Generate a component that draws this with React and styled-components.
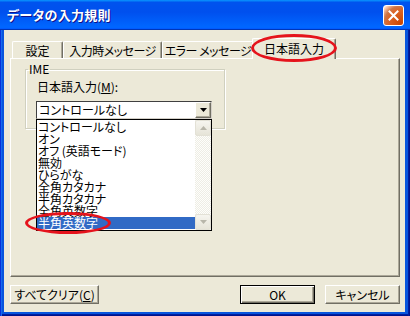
import React from 'react';
import styled, { createGlobalStyle } from 'styled-components';

const FONT = `"Noto Sans CJK JP", "Noto Sans", sans-serif`;

const Global = createGlobalStyle`
  html, body { margin: 0; padding: 0; background: #ffffff; }
  body { font-family: ${FONT}; font-size: 12px; color: #000; font-feature-settings: "palt" 1; }
  * { box-sizing: border-box; }
`;

const Window = styled.div`
  width: 410px;
  height: 316px;
  display: flex;
  flex-direction: column;
  font-family: ${FONT};
  font-feature-settings: "palt" 1;
  font-size: 12px;
  line-height: 12px;
`;

const TitleBar = styled.div`
  height: 30px;
  flex: none;
  display: flex;
  align-items: center;
  justify-content: space-between;
  padding: 0 6px 0 7px;
  background: linear-gradient(180deg, #0997ff, #0053ee 8%, #0050ee 40%, #0066ff 88%, #0066ff 93%, #005bff 95%, #0036b7 96%, #0036b7);
`;

const Title = styled.span`
  color: #fff;
  font-weight: bold;
  font-size: 13px;
  letter-spacing: 0.3px;
  text-shadow: 1px 1px #0f1089;
`;

const CloseButton = styled.div`
  width: 21px;
  height: 21px;
  border: 1px solid #fff;
  border-radius: 3px;
  display: flex;
  align-items: center;
  justify-content: center;
  background: radial-gradient(circle at 90% 90%, #cc4600 0%, #dc6527 55%, #cd7546 70%, #ffccb2 90%, #fff 100%);
`;

const Frame = styled.div`
  flex: 1;
  display: flex;
  padding: 0 5px 4px 4px;
  background: #0855dd;
  box-shadow: inset 1px 0 #0831d9, inset 2px 0 #166aee, inset -1px 0 #00138c, inset -2px 0 #001ea0, inset 0 -1px #00138c, inset 0 -2px #001ea0;
`;

const Body = styled.div`
  flex: 1;
  display: flex;
  flex-direction: column;
  background: #ece9d8;
  padding: 8px 5px 8px 6px;
`;

const TabStrip = styled.div`
  height: 20px;
  display: flex;
  align-items: flex-end;
  padding-left: 2px;
  position: relative;
  z-index: 2;
`;

const Tab = styled.div`
  position: relative;
  width: ${p => p.$w}px;
  height: ${p => (p.$active ? 21 : 17)}px;
  margin: ${p => (p.$active ? '0 -2px -1px -2px' : '0')};
  display: flex;
  align-items: center;
  justify-content: center;
  padding-top: ${p => (p.$active ? 0 : 1)}px;
  background: #ece9d8;
  border-top: 1px solid #fff;
  border-left: 1px solid #fff;
  border-right: 1px solid #716f64;
  border-radius: 2px 2px 0 0;
  box-shadow: inset -1px 0 #aca899;
  z-index: ${p => (p.$active ? 2 : 1)};
  white-space: nowrap;
  letter-spacing: ${p => p.$ls || 0}px;
`;

const Mark = styled.div`
  position: absolute;
  left: ${p => p.$x}px;
  top: ${p => p.$y}px;
  width: ${p => p.$w}px;
  height: ${p => p.$h}px;
  border: 3px solid #e5131c;
  border-radius: 50%;
  pointer-events: none;
  z-index: 5;
`;

const Panel = styled.div`
  height: 219px;
  flex: none;
  position: relative;
  border-top: 1px solid #fff;
  border-left: 1px solid #fff;
  border-right: 1px solid #716f64;
  border-bottom: 1px solid #716f64;
  box-shadow: inset -1px -1px #aca899;
  padding: 4px 0 0 14px;
`;

const Group = styled.fieldset`
  width: 200px;
  height: 66px;
  margin: 0;
  padding: 6px 0 0 10px;
  border: 1px solid #d0d0bf;
  box-shadow: inset 1px 1px #fff, 1px 1px #fff;
`;

const Legend = styled.legend`
  padding: 0 1px;
  margin-left: -8px;
  font-size: 12px;
  line-height: 12px;
`;

const FieldLabel = styled.div`
  height: 12px;
  margin: 0 0 8px 1px;
  white-space: nowrap;
`;

const Underline = styled.span`
  text-decoration: underline;
`;

const Combo = styled.div`
  position: relative;
  width: 176px;
  height: 18px;
  background: #fff;
  border: 1px solid;
  border-color: #404040 #d4d0c8 #d4d0c8 #404040;
  display: flex;
  align-items: center;
  justify-content: space-between;
  padding-left: 2px;
`;

const DropButton = styled.div`
  width: 16px;
  height: 16px;
  background: #ece9d8;
  border: 1px solid;
  border-color: #fff #716f64 #716f64 #fff;
  box-shadow: inset -1px -1px #aca899;
  display: flex;
  align-items: center;
  justify-content: center;
`;

const DropList = styled.div`
  position: absolute;
  left: -1px;
  top: 17px;
  width: 176px;
  height: 112px;
  background: #fff;
  border: 1px solid #000;
  display: flex;
  z-index: 4;
`;

const Items = styled.div`
  flex: 1;
  display: flex;
  flex-direction: column;
  padding-top: 1px;
`;

const Item = styled.div`
  position: relative;
  height: 12px;
  line-height: 12px;
  padding-left: 1px;
  white-space: nowrap;
  background: ${p => (p.$selected ? '#316ac5' : 'transparent')};
  color: ${p => (p.$selected ? '#fff' : '#000')};
`;

const ScrollBar = styled.div`
  width: 16px;
  display: flex;
  flex-direction: column;
  background: repeating-conic-gradient(#fefefb 0 25%, #eeede5 0 50%) 0 0 / 2px 2px;
`;

const ScrollButton = styled.div`
  width: 16px;
  height: 16px;
  flex: none;
  display: flex;
  align-items: center;
  justify-content: center;
  background: linear-gradient(180deg, #f6f5ef, #e6e4d8);
  border: 1px solid #e3e1d6;
  border-radius: 2px;
`;

const Track = styled.div`
  flex: 1;
`;

const ButtonRow = styled.div`
  display: flex;
  margin-top: 8px;
  height: 19px;
`;

const Button = styled.div`
  width: ${p => p.$w}px;
  height: 19px;
  margin-left: ${p => p.$ml || 0}px;
  display: flex;
  align-items: center;
  justify-content: center;
  background: #ece9d8;
  white-space: nowrap;
  border: 1px solid;
  border-color: ${p => (p.$default ? '#000' : '#fff #716f64 #716f64 #fff')};
  box-shadow: ${p =>
    p.$default
      ? 'inset 1px 1px #fff, inset -1px -1px #716f64, inset -2px -2px #aca899'
      : 'inset -1px -1px #aca899'};
`;

const Spacer = styled.div`
  flex: 1;
`;

const Tri = ({ dir = 'down', color = '#000' }) => (
  <svg width="7" height="4" viewBox="0 0 7 4">
    {dir === 'down' ? (
      <path d="M0 0H7L3.5 4Z" fill={color} />
    ) : (
      <path d="M0 4H7L3.5 0Z" fill={color} />
    )}
  </svg>
);

const items = [
  'コントロールなし',
  'オン',
  'オフ (英語モード)',
  '無効',
  'ひらがな',
  '全角カタカナ',
  '半角カタカナ',
  '全角英数字',
  '半角英数字',
];

export default function App() {
  return (
    <>
      <Global />
      <Window>
        <TitleBar>
          <Title>データの入力規則</Title>
          <CloseButton>
            <svg width="11" height="11" viewBox="0 0 11 11">
              <path d="M1.5 1.5L9.5 9.5M9.5 1.5L1.5 9.5" stroke="#fff" strokeWidth="2" strokeLinecap="square" />
            </svg>
          </CloseButton>
        </TitleBar>
        <Frame>
          <Body>
            <TabStrip>
              <Tab $w={51}>設定</Tab>
              <Tab $w={99} $ls={-0.5}>入力時メッセージ</Tab>
              <Tab $w={92} $ls={-0.5}>エラー メッセージ</Tab>
              <Tab $w={84} $active>
                日本語入力
                <Mark $x={-2} $y={-5} $w={86} $h={28} />
              </Tab>
            </TabStrip>
            <Panel>
              <Group>
                <Legend>IME</Legend>
                <FieldLabel>
                  日本語入力(<Underline>M</Underline>):
                </FieldLabel>
                <Combo>
                  <span>コントロールなし</span>
                  <DropButton>
                    <Tri />
                  </DropButton>
                  <DropList>
                    <Items>
                      {items.map((t, i) => (
                        <Item key={t} $selected={i === items.length - 1}>
                          {t}
                          {i === items.length - 1 && <Mark $x={-12} $y={-5} $w={86} $h={22} />}
                        </Item>
                      ))}
                    </Items>
                    <ScrollBar>
                      <ScrollButton>
                        <Tri dir="up" color="#b8b6aa" />
                      </ScrollButton>
                      <Track />
                      <ScrollButton>
                        <Tri color="#b8b6aa" />
                      </ScrollButton>
                    </ScrollBar>
                  </DropList>
                </Combo>
              </Group>
            </Panel>
            <ButtonRow>
              <Button $w={89}>
                すべてクリア(<Underline>C</Underline>)
              </Button>
              <Spacer />
              <Button $w={75} $default>
                OK
              </Button>
              <Button $w={75} $ml={10}>
                キャンセル
              </Button>
            </ButtonRow>
          </Body>
        </Frame>
      </Window>
    </>
  );
}
